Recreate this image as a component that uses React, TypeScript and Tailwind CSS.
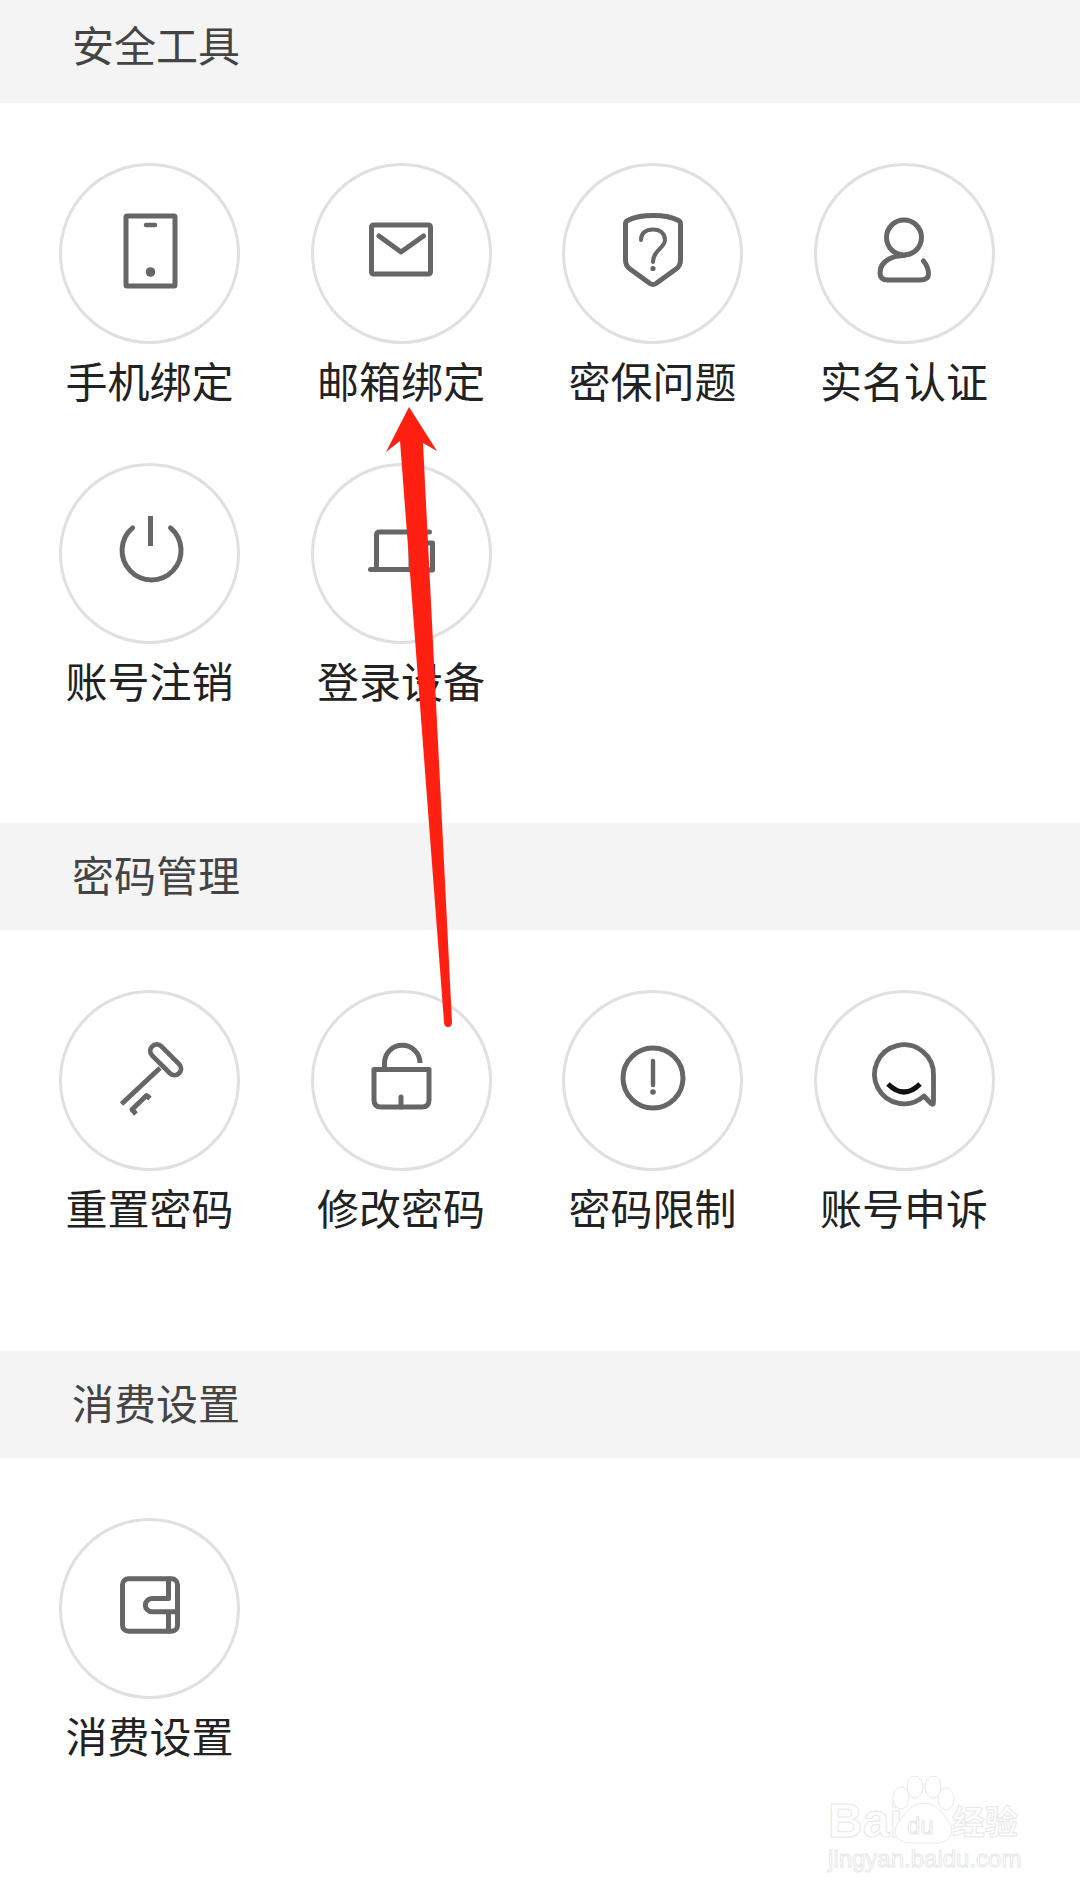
import type { ReactNode } from 'react';

const G = ({ children }: { children: ReactNode }) => (
  <svg
    viewBox="0 0 100 100"
    className="w-[100px] h-[100px]"
    fill="none"
    stroke="#666666"
    strokeWidth="5"
    strokeLinecap="round"
    strokeLinejoin="round"
  >
    {children}
  </svg>
);

const icons: Record<string, ReactNode> = {
  phone: (
    <G>
      <rect x="26" y="12" width="49" height="70" rx="1" />
      <path d="M46 21h9" strokeWidth="4.5" />
      <circle cx="50.5" cy="68" r="4.8" fill="#666666" stroke="none" />
    </G>
  ),
  mail: (
    <G>
      <rect x="20.5" y="21" width="59" height="49" rx="2" />
      <path d="M28 32 L50 48 L72.5 32" strokeWidth="5" />
    </G>
  ),
  shield: (
    <G>
      <path d="M50.5 11.5 C39 11.5 29 14 24.5 16.5 Q22.5 17.5 22.5 20 V56 Q22.5 62 27 65 L47 79.5 Q50 81.5 53 79.5 L73 65 Q77.5 62 77.5 56 V20 Q77.5 17.5 75.5 16.5 C71 14 62 11.5 50.5 11.5 Z" />
      <path d="M38 36 C38 29 43 25.5 50 25.5 C57 25.5 62 29.5 62 36 C62 44 50 46 50 58" strokeWidth="4" />
      <circle cx="50" cy="64.5" r="2.6" fill="#666666" stroke="none" />
    </G>
  ),
  person: (
    <G>
      <circle cx="50" cy="33.5" r="17.5" />
      <path d="M50 51.5 C42 51.5 26 55 26 69 C26 74 29 76 34 76 H66 C72 76 74.5 74 74.5 70 C74.5 64 72 60 69.5 57" />
    </G>
  ),
  power: (
    <G>
      <path d="M32.6 23.8 A29.5 29.5 0 1 0 70.5 23.8" />
      <path d="M50.5 12 V42" strokeLinecap="butt" />
    </G>
  ),
  laptop: (
    <G>
      <path d="M25.5 65 V31 Q25.5 28 28.5 28 H78.5" />
      <path d="M19.5 65.5 H60" />
      <path d="M81.5 39 V66 H60 V39 Z" strokeLinecap="butt" />
    </G>
  ),
  key: (
    <G>
      <rect x="47" y="22.5" width="38" height="13" rx="6.5" transform="rotate(45 66 28.5)" strokeWidth="4.8" />
      <path d="M60 37 L21.5 73" strokeWidth="5" strokeLinecap="butt" />
      <path d="M50 67.5 L46.5 64.5 L32 78.5 L36 83" strokeWidth="5" strokeLinecap="butt" />
    </G>
  ),
  lock: (
    <G>
      <path d="M33.5 36 V32 A17.7 17.7 0 0 1 69 32" strokeLinecap="butt" />
      <path d="M23 38.5 H78 V69 Q78 76 71 76 H30 Q23 76 23 69 Z" />
      <path d="M50 66 V76" />
    </G>
  ),
  alert: (
    <G>
      <circle cx="50" cy="47" r="30" />
      <path d="M50 30 V54" strokeWidth="4.4" />
      <circle cx="50" cy="61" r="2.8" fill="#666666" stroke="none" />
    </G>
  ),
  chat: (
    <G>
      <path d="M70 65 A29.5 29.5 0 1 1 79.5 44 V71 Q79.5 74.5 77 72.5 L70 65 Z" strokeWidth="4.8" />
      <path d="M34 53 Q50 69 66 53" stroke="#111111" strokeWidth="5" strokeLinecap="butt" />
    </G>
  ),
  wallet: (
    <G>
      <rect x="22.5" y="19.7" width="55" height="52.5" rx="6" />
      <path d="M68.5 20 V39.5 H52 A6.6 6.6 0 0 0 52 52.8 H77 M68.5 52.8 V72" strokeWidth="5" />
    </G>
  ),
};

const Item = ({ icon, label }: { icon: string; label: string }) => (
  <div className="w-[181px] flex flex-col items-center">
    <div className="w-[181px] h-[181px] rounded-full border-[3px] border-[#e0e0e0] flex items-center justify-center">
      {icons[icon]}
    </div>
    <div className="mt-[6px] text-[42px] leading-[60px] text-[#222222] whitespace-nowrap">{label}</div>
  </div>
);

const Section = ({ title, first, className, items }: { title: string; first?: boolean; className?: string; items: [string, string][] }) => (
  <section className={className}>
    <div className={first ? 'h-[103px] pb-[17px] bg-[#f4f4f4] flex items-center pl-[72px]' : 'h-[107px] pb-[7px] bg-[#f4f4f4] flex items-center pl-[72px]'}>
      <span className="text-[42px] text-[#444444]">{title}</span>
    </div>
    <div className="pl-[59px] pt-[60px] pb-[113px] flex flex-wrap gap-x-[70.5px] gap-y-[53px]">
      {items.map(([icon, label]) => (
        <Item key={label} icon={icon} label={label} />
      ))}
    </div>
  </section>
);

export default function App() {
  return (
    <div className="relative w-[1080px] h-[1892px] overflow-hidden bg-white font-['Noto_Sans_CJK_SC','Noto_Sans',sans-serif]">
      <Section
        first
        title="安全工具"
        items={[
          ['phone', '手机绑定'],
          ['mail', '邮箱绑定'],
          ['shield', '密保问题'],
          ['person', '实名认证'],
          ['power', '账号注销'],
          ['laptop', '登录设备'],
        ]}
      />
      <Section
        title="密码管理"
        className="mb-[1px]"
        items={[
          ['key', '重置密码'],
          ['lock', '修改密码'],
          ['alert', '密码限制'],
          ['chat', '账号申诉'],
        ]}
      />
      <Section title="消费设置" items={[['wallet', '消费设置']]} />

      {/* red arrow drawn on top of the screenshot */}
      <svg viewBox="0 0 1080 1892" className="absolute inset-0 w-[1080px] h-[1892px] pointer-events-none">
        <path
          d="M409 407 L437 451 L423 443 L452 1022 Q452 1027 448 1027 Q444 1027 444 1022 L400 441 L386 452 Z"
          fill="#ff2012"
        />
      </svg>

      {/* watermark */}
      <div className="absolute left-[828px] top-[1776px] w-[200px] h-[100px] text-white font-['Liberation_Sans',sans-serif] [-webkit-text-stroke:1px_#e8e8e8]">
        <span className="absolute left-0 top-[22px] text-[48px] leading-[46px] font-bold">Bai</span>
        <svg viewBox="0 0 200 100" className="absolute inset-0 w-[200px] h-[100px]" fill="white" stroke="#e8e8e8" strokeWidth="1">
          <ellipse cx="73" cy="22" rx="8" ry="11" />
          <ellipse cx="87" cy="11" rx="8" ry="11" />
          <ellipse cx="105" cy="11" rx="8" ry="11" />
          <ellipse cx="118" cy="23" rx="8" ry="11" />
          <path d="M96 27 C110 27 118 42 122 48 C128 58 118 68 108 67 H84 C72 68 62 58 70 47 C76 40 82 27 96 27 Z" />
        </svg>
        <span className="absolute left-[79px] top-[38px] text-[24px] leading-[24px]">du</span>
        <span className="absolute left-[124px] top-[24px] text-[33px] leading-[40px] font-['Noto_Sans_CJK_SC',sans-serif] font-bold whitespace-nowrap">经验</span>
        <span className="absolute left-0 top-[67px] text-[24px] leading-[32px] whitespace-nowrap">jingyan.baidu.com</span>
      </div>
    </div>
  );
}
